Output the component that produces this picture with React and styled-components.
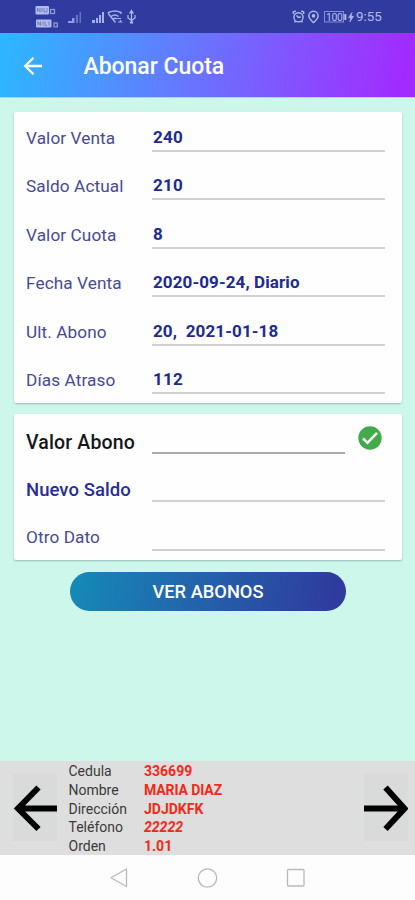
import React from "react";
import styled, { createGlobalStyle } from "styled-components";

const GlobalStyle = createGlobalStyle`
  *, *::before, *::after { box-sizing: border-box; }
  body { margin: 0; font-family: Roboto, "Liberation Sans", sans-serif; }
`;

const Screen = styled.div`
  width: 415px;
  height: 900px;
  display: flex;
  flex-direction: column;
  overflow: hidden;
  background: #cef7ec;
`;

const StatusBar = styled.header`
  flex: none;
  height: 33px;
  padding: 1px 32px 0 34px;
  display: flex;
  justify-content: space-between;
  align-items: center;
  background: #2f3b9e;
  color: #b3bbec;
`;

const StatusGroup = styled.div`
  display: flex;
  align-items: center;
`;

const Clock = styled.span`
  margin-left: 2px;
  width: 27px;
  font-size: 13.4px;
  line-height: 16px;
  white-space: nowrap;
`;

const AppBar = styled.div`
  flex: none;
  height: 65px;
  display: flex;
  align-items: center;
  padding-left: 20px;
  border-bottom: 1px solid #a9d3f2;
  background: linear-gradient(100deg, #2fb4ff 3%, #6c70ff 50%, #a22bff 97%);
`;

const BackButton = styled.button`
  width: 26px;
  height: 26px;
  margin-top: 1px;
  padding: 0;
  border: 0;
  background: none;
  color: #fff;
  display: flex;
`;

const Title = styled.h1`
  margin: 4px 0 0 37.5px;
  font-size: 23px;
  line-height: 28px;
  font-weight: 500;
  letter-spacing: -0.05px;
  color: #fff;
`;

const Content = styled.main`
  flex: 1;
  display: flex;
  flex-direction: column;
  padding: 14px 13px 0 14px;
`;

const Card = styled.section`
  height: ${(p) => p.$height}px;
  margin-bottom: 11px;
  padding: 0 17px 0 12px;
  border-radius: 2px;
  background: #fefefe;
  box-shadow: 0 1px 2px rgba(60, 110, 100, 0.4);
`;

const Row = styled.div`
  height: ${(p) => p.$height}px;
  display: grid;
  grid-template-columns: 126px 1fr auto;
  align-items: start;
`;

const Label = styled.span`
  padding-top: ${(p) => p.$top ?? 15}px;
  font-size: ${(p) => p.$size || 17.2}px;
  line-height: 22px;
  font-weight: ${(p) => (p.$strong ? 500 : 400)};
  letter-spacing: ${(p) => p.$spacing ?? 0.1}px;
  color: ${(p) => p.$color || "#474a96"};
  white-space: nowrap;
`;

const Field = styled.div`
  height: 40px;
  padding: 15px 0 0 1px;
  border-bottom: 2px solid ${(p) => (p.$active ? "#aaaaac" : "#d1d1d3")};
  font-size: 17px;
  line-height: 21px;
  font-weight: 700;
  letter-spacing: ${(p) => p.$spacing ?? 0.3}px;
  color: #202a91;
  white-space: pre;
`;

const CheckIcon = styled.svg`
  width: 24px;
  height: 24px;
  margin: 12px 3px 0 13px;
`;

const HistoryButton = styled.button`
  align-self: center;
  width: 276px;
  height: 39px;
  margin-top: 1px;
  padding: 0;
  border: 0;
  border-radius: 20px;
  background: linear-gradient(100deg, #1688b7 3%, #2460ab 50%, #2f3b9e 95%);
  color: #fff;
  font: 500 18.3px/24px Roboto, sans-serif;
`;

const ClientPanel = styled.footer`
  flex: none;
  height: 94px;
  display: flex;
  justify-content: space-between;
  align-items: flex-start;
  padding: 0 7px 0 13px;
  background: #dedede;
`;

const StepButton = styled.button`
  width: 44px;
  height: 67px;
  margin-top: 13px;
  padding: 0;
  border: 0;
  background: #d9dbdb;
  color: #000;
  display: flex;
  align-items: center;
  justify-content: center;
`;

const ClientData = styled.dl`
  flex: 1;
  margin: 1px 0 0 11.5px;
  display: grid;
  grid-template-columns: 75.5px 1fr;
  grid-auto-rows: 18.75px;
  font-size: 14px;
  line-height: 19px;
`;

const Term = styled.dt`
  color: #3a3a3a;
`;

const Detail = styled.dd`
  margin: 0;
  font-weight: 700;
  font-style: ${(p) => (p.$italic ? "italic" : "normal")};
  color: #f02a16;
  letter-spacing: ${(p) => p.$spacing || 0}px;
`;

const NavBar = styled.nav`
  flex: none;
  height: 45px;
  display: flex;
  align-items: center;
  justify-content: center;
  background: #fdfdfd;
`;

const summary = [
  ["Valor Venta", "240"],
  ["Saldo Actual", "210"],
  ["Valor Cuota", "8"],
  ["Fecha Venta", "2020-09-24, Diario", 0.1],
  ["Ult. Abono", "20,  2021-01-18", 0.12],
  ["Días Atraso", "112"],
];

const client = [
  ["Cedula", "336699", 0],
  ["Nombre", "MARIA DIAZ", -0.1],
  ["Dirección", "JDJDKFK"],
  ["Teléfono", "22222"],
  ["Orden", "1.01"],
];

function CarrierIcons() {
  return (
    <svg width="104" height="26" viewBox="34 4 104 26" fill="none">
      <g fill="#b3bbec">
        <rect x="35.5" y="6" width="13.5" height="8.5" rx="1" />
        <rect x="36" y="19.5" width="15.5" height="8" rx="1" />
      </g>
      <g stroke="#6e78c4" strokeWidth="0.9">
        <path d="M37.5 12V8l2.5 4V8M42 12V8M44 8v4h3V8M38 25.5v-4l2.5 4v-4M43 21.5v4M45 21.5v4h2M49 21.5v4" />
      </g>
      <g stroke="#8f99d9" strokeWidth="1.3">
        <rect x="50.5" y="9.5" width="4" height="4" />
        <rect x="54" y="23" width="3.3" height="3.8" />
      </g>
      <path fill="#929bdb" d="M68 21h5v2h-5zM72 18h2.5v5H72z" />
      <path fill="#6974c0" d="M76 15h2v8h-2zM79.5 12h1.5v11h-1.5z" />
      <path fill="#a8b1e7" d="M92 20h3v3h-3zM96 18h2v5h-2zM99 15h2v8h-2zM102 12h2v11h-2z" />
      <g stroke="#a8b1e7" strokeWidth="1.4">
        <path d="M108.500 14v-1.500c3.800-1.700 9-1.700 12.500 0V14M108.500 14l7 8.500M111 16.500c2.400-2 5.200-2 7.500 0M113 19c1.200-1 2.500-1 3.500 0" />
        <path strokeWidth="1.2" d="M116 18.500h5M118 22h3.500l-1.500-2" />
      </g>
      <g stroke="#b3bbec" strokeWidth="1.2">
        <path d="M131.500 12v11M128 15v3l3.500 2.500 3.500-2.500v-3" />
        <path fill="#b3bbec" d="m131.500 10.500 1.500 2.500h-3zM130.500 22h2v1h-2z" />
      </g>
    </svg>
  );
}

function SystemIcons() {
  return (
    <svg width="62" height="20" viewBox="292 7 62 20" fill="none" stroke="#b3bbec" strokeWidth="1.4">
      <circle cx="298.500" cy="17.300" r="4.600" />
      <path d="M293.300 14v-2l2.500-1M303.700 14v-2l-2.500-1M296.500 15.500l2 2 2.300-.5M295.500 20.800l-1 1.500M301.500 20.800l1 1.500" />
      <path d="M313.500 22.600c-3-3-4.700-4.500-4.700-6.600a4.700 4.700 0 0 1 9.400 0c0 2.100-1.700 3.600-4.700 6.600z" />
      <circle cx="313.500" cy="15.900" r="1.100" fill="#b3bbec" />
      <rect x="324.500" y="11.500" width="19" height="10.500" strokeWidth="1" opacity=".65" />
      <path d="M345.300 14v6" strokeWidth="2" />
      <text x="326" y="20.700" fill="#b3bbec" stroke="none" fontSize="10.500" textLength="17" fontFamily="Roboto, sans-serif">100</text>
      <path fill="#b3bbec" strokeWidth=".6" d="m352 12.500-3.500 5h2.300l-1 4.500 3.800-5.700h-2.400z" />
    </svg>
  );
}

function StepArrow({ forward }) {
  return (
    <svg width="44" height="48" viewBox="0 0 44 48" fill="none" stroke="currentColor" strokeWidth="6">
      <path d={forward ? "M0 24.500h40M21.500 3.500 40.500 24.500 21.500 45" : "M44 24.500H4M25.500 3.500 5 24.500 25.500 45"} />
    </svg>
  );
}

export default function App() {
  return (
    <>
      <GlobalStyle />
      <Screen>
        <StatusBar>
          <StatusGroup><CarrierIcons /></StatusGroup>
          <StatusGroup><SystemIcons /><Clock>9:55</Clock></StatusGroup>
        </StatusBar>
        <AppBar>
          <BackButton aria-label="Volver">
            <svg width="26" height="26" viewBox="0 0 26 26" fill="none" stroke="currentColor" strokeWidth="2.300">
              <path d="M22 13H5.500M13.500 4.700 5.200 13l8.300 8.300" />
            </svg>
          </BackButton>
          <Title>Abonar Cuota</Title>
        </AppBar>
        <Content>
          <Card $height={291}>
            {summary.map(([label, value, spacing]) => (
              <Row key={label} $height={48.4}>
                <Label>{label}</Label>
                <Field $spacing={spacing}>{value}</Field>
              </Row>
            ))}
          </Card>
          <Card $height={146}>
            <Row $height={47.5}>
              <Label $strong $top={17.5} $size={19.5} $spacing={0.15} $color="#17171a">Valor Abono</Label>
              <Field $active />
              <CheckIcon viewBox="0 0 24 24">
                <circle cx="12" cy="12" r="11.700" fill="#43aa49" />
                <path d="m5 12.500 4.500 4.300 9.500-10" fill="none" stroke="#fff" strokeWidth="2.500" />
              </CheckIcon>
            </Row>
            <Row $height={49}>
              <Label $strong $top={17} $size={18.5} $spacing={0.05} $color="#292c9a">Nuevo Saldo</Label>
              <Field />
            </Row>
            <Row $height={49}>
              <Label>Otro Dato</Label>
              <Field />
            </Row>
          </Card>
          <HistoryButton>VER ABONOS</HistoryButton>
        </Content>
        <ClientPanel>
          <StepButton aria-label="Anterior"><StepArrow /></StepButton>
          <ClientData>
            {client.map(([term, detail, spacing]) => (
              <React.Fragment key={term}>
                <Term>{term}</Term>
                <Detail $spacing={spacing} $italic={term === "Teléfono"}>{detail}</Detail>
              </React.Fragment>
            ))}
          </ClientData>
          <StepButton aria-label="Siguiente"><StepArrow forward /></StepButton>
        </ClientPanel>
        <NavBar>
          <svg width="200" height="24" viewBox="108 866 200 24" fill="none" stroke="#b9b9bb" strokeWidth="1.300">
            <path d="M126.500 869v17.500L111 877.800z" strokeLinejoin="round" />
            <circle cx="207.500" cy="878" r="9.200" />
            <rect x="287.500" y="869.500" width="16.500" height="16.500" rx="1" />
          </svg>
        </NavBar>
      </Screen>
    </>
  );
}
